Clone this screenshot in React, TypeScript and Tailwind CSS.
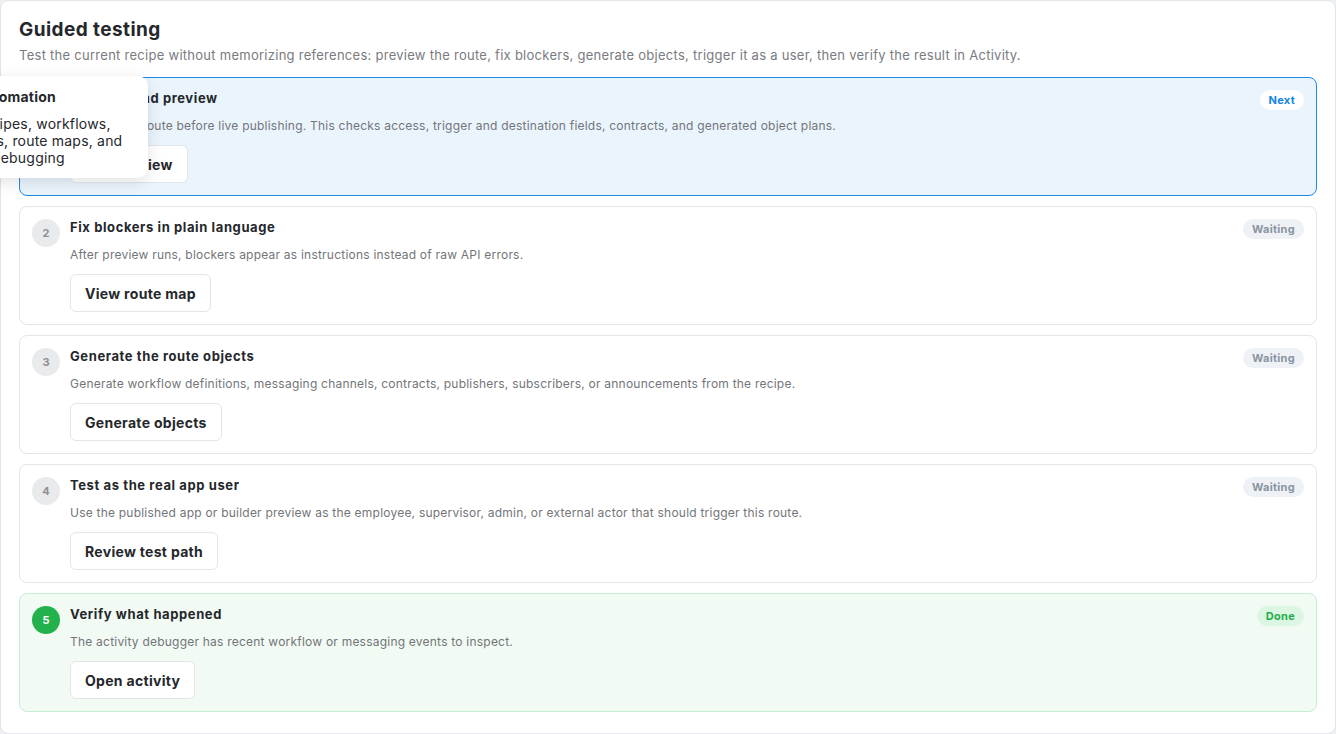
import React from 'react';

type Status = 'next' | 'waiting' | 'done';

interface Step {
  n: number;
  title: string;
  desc: string;
  action: string;
  status: Status;
}

const steps: Step[] = [
  {
    n: 1,
    title: 'Run backend preview',
    desc: 'Preview the route before live publishing. This checks access, trigger and destination fields, contracts, and generated object plans.',
    action: 'Run preview',
    status: 'next',
  },
  {
    n: 2,
    title: 'Fix blockers in plain language',
    desc: 'After preview runs, blockers appear as instructions instead of raw API errors.',
    action: 'View route map',
    status: 'waiting',
  },
  {
    n: 3,
    title: 'Generate the route objects',
    desc: 'Generate workflow definitions, messaging channels, contracts, publishers, subscribers, or announcements from the recipe.',
    action: 'Generate objects',
    status: 'waiting',
  },
  {
    n: 4,
    title: 'Test as the real app user',
    desc: 'Use the published app or builder preview as the employee, supervisor, admin, or external actor that should trigger this route.',
    action: 'Review test path',
    status: 'waiting',
  },
  {
    n: 5,
    title: 'Verify what happened',
    desc: 'The activity debugger has recent workflow or messaging events to inspect.',
    action: 'Open activity',
    status: 'done',
  },
];

const cardTone: Record<Status, string> = {
  next: 'bg-[#eaf4fd] border-[#1f8ae6]',
  waiting: 'bg-white border-[#e3e5e8]',
  done: 'bg-[#f2faf4] border-[#c6ecd1]',
};

const circleTone: Record<Status, string> = {
  next: 'bg-[#1f8ae6] text-white',
  waiting: 'bg-[#e9eaec] text-[#8b8f94]',
  done: 'bg-[#23b14c] text-white',
};

const badgeTone: Record<Status, string> = {
  next: 'bg-white text-[#1384e6]',
  waiting: 'bg-[#eef1f5] text-[#8a94a1]',
  done: 'bg-[#dcf6e4] text-[#25ae4b]',
};

const badgeLabel: Record<Status, string> = {
  next: 'Next',
  waiting: 'Waiting',
  done: 'Done',
};

const StepCard = ({ step }: { step: Step }) => (
  <div className={`flex items-start rounded-lg border px-3 py-3 ${cardTone[step.status]}`}>
    <div
      className={`flex h-7 w-7 shrink-0 items-center justify-center rounded-full text-[11px] font-bold ${circleTone[step.status]}`}
    >
      {step.n}
    </div>
    <div className="ml-[10px] flex min-w-0 flex-1 flex-col items-start">
      <div className="text-[13px] font-bold leading-4 tracking-[0.6px] text-[#25272b]">{step.title}</div>
      <div className="mt-3 text-[12px] leading-4 tracking-[0.22px] text-[#737579]">{step.desc}</div>
      <button className="mt-[11px] h-[38px] rounded-md border border-[#e3e5e8] bg-white px-[14px] text-[14px] font-bold tracking-[0.3px] text-[#25272b]">
        {step.action}
      </button>
    </div>
    <span
      className={`flex h-5 shrink-0 items-center rounded-full px-[9px] text-[11px] font-bold tracking-[0.3px] ${badgeTone[step.status]}`}
    >
      {badgeLabel[step.status]}
    </span>
  </div>
);

export default function App() {
  return (
    <div
      className="relative h-[734px] w-[1336px] overflow-hidden bg-[#eef0f3]"
      style={{ fontFamily: 'Inter, "Noto Sans", sans-serif' }}
    >
      <div className="h-[734px] rounded-lg border border-[#e3e5e8] bg-white px-[18px] pt-[17px]">
        <h2 className="text-[19px] font-bold leading-6 tracking-[0.43px] text-[#25272b]">Guided testing</h2>
        <p className="mt-[3px] text-[13px] leading-5 tracking-[0.27px] text-[#797b80]">
          Test the current recipe without memorizing references: preview the route, fix blockers, generate
          objects, trigger it as a user, then verify the result in Activity.
        </p>
        <div className="mt-[12px] flex flex-col gap-[10px]">
          {steps.map((s) => (
            <StepCard key={s.n} step={s} />
          ))}
        </div>
      </div>

      {/* tooltip from the sidebar, partly off screen */}
      <div className="absolute left-[-40px] top-[76px] w-[188px] rounded-[10px] bg-white px-[14px] pb-[12px] pt-[12px] shadow-[0_4px_16px_rgba(0,0,0,0.12)]">
        <div className="text-[14px] font-bold leading-[18px] tracking-[0.2px] text-[#25272b]">Automation</div>
        <div className="mt-[9px] text-[14px] leading-[17px] tracking-[0.2px] text-[#25272b]">
          Recipes, workflows,
          <br />
          runs, route maps, and
          <br />
          AI debugging
        </div>
      </div>
    </div>
  );
}
